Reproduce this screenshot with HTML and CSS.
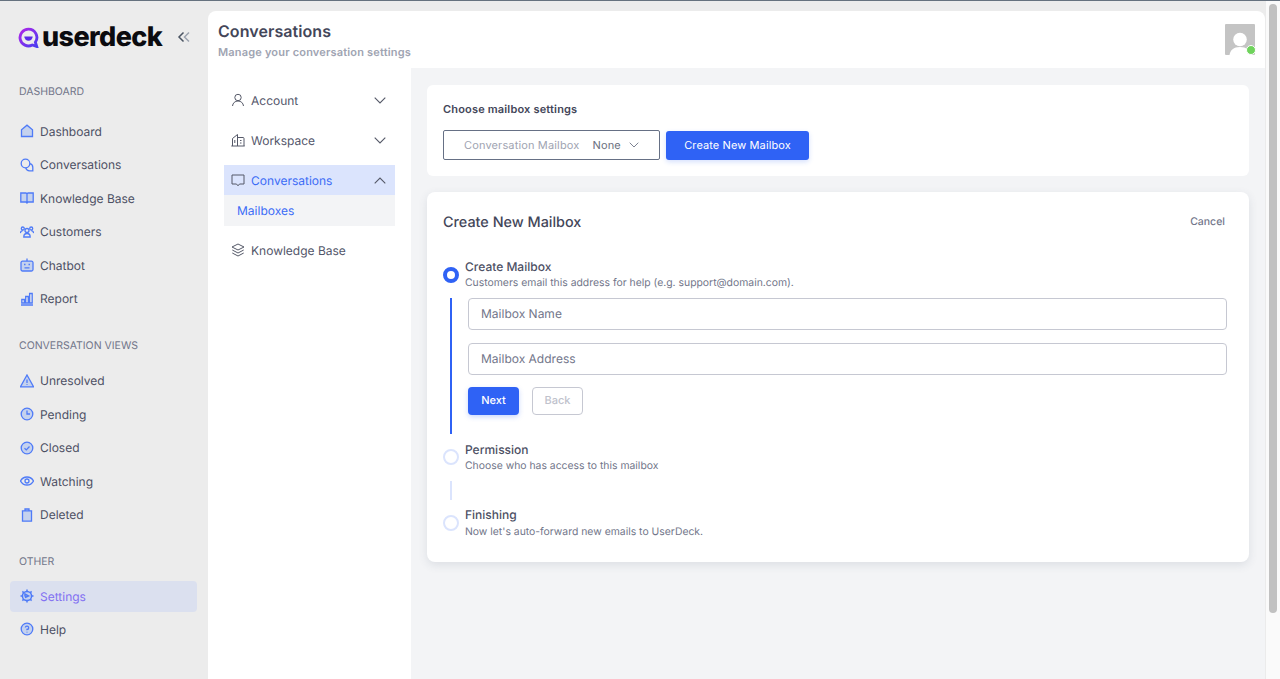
FILE: index.html
```html
<!DOCTYPE html>
<html lang="en">
<head>
<meta charset="utf-8">
<title>Conversations - UserDeck</title>
<link rel="stylesheet" href="styles.css">
</head>
<body>
<svg class="sprite" width="0" height="0" aria-hidden="true">
  <defs>
    <linearGradient id="logo-grad" x1="0" y1="0" x2="1" y2="1">
      <stop offset="0" stop-color="#b026e8"/>
      <stop offset="1" stop-color="#4a3cf0"/>
    </linearGradient>
  </defs>
</svg>
<div class="app">
  <aside class="sidebar">
    <div class="brand">
      <div class="logo">
        <svg class="logo-mark" viewBox="0 0 22 22" width="21" height="21">
          <path d="M11 2.200a8.800 8.800 0 1 0 4 16.600l4.600 1.600-1.400-4.400A8.800 8.800 0 0 0 11 2.200z" fill="none" stroke="url(#logo-grad)" stroke-width="3"/>
          <path d="M6.600 10h8.800a4.400 4.400 0 0 1-8.800 0z" fill="#5b2be8"/>
        </svg>
        <span class="logo-text">userdeck</span>
      </div>
      <svg class="collapse" viewBox="0 0 14 14" width="14" height="14"><path d="M6.500 2.500 2 7l4.500 4.500" stroke="#4b5563"/><path d="M12 2.500 7.500 7l4.500 4.500" stroke="#9ca3af"/></svg>
    </div>

    <h2 class="nav-label">DASHBOARD</h2>
    <nav class="nav-group nav-group-first">
      <a class="nav-item"><svg class="ni" viewBox="0 0 14 14"><path d="M1.500 12.500V5.800L7 1.200l5.500 4.600v6.700z"/></svg>Dashboard</a>
      <a class="nav-item"><svg class="ni line" viewBox="0 0 14 14"><circle cx="5.500" cy="5.500" r="4.300"/><path d="M9.800 5.700a3.900 3.900 0 0 1 3 3.800v3.300H9.500a3.900 3.900 0 0 1-3.700-3"/></svg>Conversations</a>
      <a class="nav-item"><svg class="ni" viewBox="0 0 14 14"><path d="M.8 2h5.200l1 .8 1-.8h5.200v9H8l-1 1-1-1H.8zM7 2.800V12"/></svg>Knowledge Base</a>
      <a class="nav-item"><svg class="ni line" viewBox="0 0 14 14"><circle cx="7" cy="5.500" r="2"/><path d="M3.800 12c0-2.200 1.300-3.500 3.200-3.500s3.200 1.300 3.200 3.500z"/><circle cx="2.800" cy="3.500" r="1.500"/><circle cx="11.200" cy="3.500" r="1.500"/><path d="M.3 8c.3-1.500 1.200-2.300 2.500-2.300M13.700 8c-.3-1.500-1.200-2.300-2.500-2.300"/></svg>Customers</a>
      <a class="nav-item"><svg class="ni" viewBox="0 0 14 14"><path d="M7 .5v2.700M2.500 3.200h9a1.500 1.500 0 0 1 1.500 1.500v6.800a1.500 1.500 0 0 1-1.500 1.500h-9A1.500 1.500 0 0 1 1 11.500V4.700a1.500 1.500 0 0 1 1.500-1.500zM4.500 9.800h5M4 6.500h1.500M8.500 6.500H10"/></svg>Chatbot</a>
      <a class="nav-item"><svg class="ni line" viewBox="0 0 14 14"><path d="M1 13h12M1.800 11V7.500h2.600V11zM5.700 11V4.500h2.600V11zM9.600 11V1.500h2.600V11z"/></svg>Report</a>
    </nav>

    <h2 class="nav-label">CONVERSATION VIEWS</h2>
    <nav class="nav-group">
      <a class="nav-item"><svg class="ni" viewBox="0 0 14 14"><path d="M7 1 13.500 12.800H.5zM7 5.500v3.500M7 10.300v.8"/></svg>Unresolved</a>
      <a class="nav-item"><svg class="ni" viewBox="0 0 14 14"><circle cx="7" cy="7" r="5.800"/><path d="M7 3.500V7h3"/></svg>Pending</a>
      <a class="nav-item"><svg class="ni" viewBox="0 0 14 14"><circle cx="7" cy="7" r="5.800"/><path d="m4.500 7.200 1.800 1.700 3.200-3.400"/></svg>Closed</a>
      <a class="nav-item"><svg class="ni line" viewBox="0 0 14 14"><path d="M.5 7C2 4.300 4.300 3 7 3s5 1.300 6.500 4C12 9.700 9.700 11 7 11S2 9.700.5 7z"/><circle cx="7" cy="7" r="2"/></svg>Watching</a>
      <a class="nav-item"><svg class="ni" viewBox="0 0 14 14"><path d="M2.500 2.800h9v10.400h-9zM1.800 2.800h10.400M5 2.800V1h4v1.800"/></svg>Deleted</a>
    </nav>

    <h2 class="nav-label">OTHER</h2>
    <nav class="nav-group">
      <a class="nav-item is-active"><svg class="ni gear" viewBox="0 0 14 14"><circle cx="7" cy="7" r="4.600"/><path d="M5 7.500V5l3.500 2-3.500 1.500"/><path d="M7 .5v1.900M7 11.600v1.900M.5 7h1.900M11.600 7h1.900M2.400 2.400l1.300 1.300M10.300 10.300l1.300 1.300M2.400 11.600l1.300-1.300M10.300 3.700l1.300-1.300"/></svg>Settings</a>
      <a class="nav-item"><svg class="ni" viewBox="0 0 14 14"><circle cx="7" cy="7" r="5.800"/><path d="M5.300 5.500A1.700 1.700 0 1 1 7 7.500v.8M7 9.700v.8"/></svg>Help</a>
    </nav>
  </aside>

  <div class="main">
    <header class="topbar">
      <div class="titles">
        <h1 class="page-title">Conversations</h1>
        <p class="page-sub">Manage your conversation settings</p>
      </div>
      <div class="avatar">
        <svg viewBox="0 0 30 31" width="30" height="31"><rect width="30" height="31" rx="1" fill="#c4c4c4"/><circle cx="15" cy="15.500" r="6.800" fill="#fff"/><path d="M4.500 31c.8-5 4-8 10.500-8s9.700 3 10.500 8z" fill="#fff"/></svg>
        <span class="status"></span>
      </div>
    </header>

    <div class="body">
      <nav class="subnav">
        <a class="sub-row"><svg class="si" viewBox="0 0 14 14"><circle cx="7" cy="4.500" r="3.200"/><path d="M1.500 13c.3-3 2.500-5 5.500-5s5.200 2 5.500 5"/></svg><span class="sub-text">Account</span><svg class="chev" viewBox="0 0 12 7"><path d="m.7.700 5.300 5.300L11.300.700"/></svg></a>
        <a class="sub-row"><svg class="si" viewBox="0 0 14 14"><path d="M.3 13h13.400M1.500 13V5.500L6.500 1.500V13M6.500 4.500h5.500a1 1 0 0 1 1 1V13M3.800 7v3M9 7.500h1.500M9 10h1.500"/></svg><span class="sub-text">Workspace</span><svg class="chev" viewBox="0 0 12 7"><path d="m.7.700 5.300 5.300L11.300.700"/></svg></a>
        <div class="sub-open">
          <a class="sub-row is-open"><svg class="si" viewBox="0 0 14 14"><path d="M1 2h12v9H8.500L7 12.800 5.500 11H1z"/></svg><span class="sub-text">Conversations</span><svg class="chev" viewBox="0 0 12 7"><path d="m.7 6.300 5.300-5.300 5.300 5.300"/></svg></a>
          <a class="sub-child">Mailboxes</a>
        </div>
        <a class="sub-row"><svg class="si" viewBox="0 0 14 14"><path d="M7 1 13 4 7 7 1 4zM1.300 7 7 10l5.700-3M1.300 10 7 13l5.700-3"/></svg><span class="sub-text">Knowledge Base</span></a>
      </nav>

      <main class="content">
        <section class="card chooser">
          <h3 class="chooser-title">Choose mailbox settings</h3>
          <div class="chooser-row">
            <div class="select">
              <span class="select-label">Conversation Mailbox</span>
              <span class="select-value">None</span>
              <svg class="select-chev" viewBox="0 0 10 6"><path d="m.7.700 4.300 4.300L9.300.700"/></svg>
            </div>
            <button class="btn btn-create">Create New Mailbox</button>
          </div>
        </section>

        <section class="card wizard">
          <div class="wizard-head">
            <h2 class="wizard-title">Create New Mailbox</h2>
            <span class="cancel">Cancel</span>
          </div>

          <div class="step step-first">
            <span class="dot is-current"></span>
            <div class="step-text">
              <div class="step-name">Create Mailbox</div>
              <div class="step-desc">Customers email this address for help (e.g. support@domain.com).</div>
            </div>
          </div>
          <div class="step-body">
            <div class="rail is-current"></div>
            <div class="form">
              <input class="field" placeholder="Mailbox Name">
              <input class="field" placeholder="Mailbox Address">
              <div class="form-actions">
                <button class="btn btn-next">Next</button>
                <button class="btn btn-back">Back</button>
              </div>
            </div>
          </div>

          <div class="step">
            <span class="dot"></span>
            <div class="step-text">
              <div class="step-name">Permission</div>
              <div class="step-desc">Choose who has access to this mailbox</div>
            </div>
          </div>
          <div class="step-gap"><div class="rail"></div></div>
          <div class="step step-last">
            <span class="dot"></span>
            <div class="step-text">
              <div class="step-name">Finishing</div>
              <div class="step-desc">Now let's auto-forward new emails to UserDeck.</div>
            </div>
          </div>
        </section>
      </main>
    </div>
  </div>

  <div class="scrollbar"><div class="thumb"></div></div>
</div>
</body>
</html>
```

FILE: styles.css
```css
* { box-sizing: border-box; }
html, body { height: 100%; margin: 0; }
body {
  overflow: hidden;
  font-family: Inter, "Liberation Sans", sans-serif;
  color: #434659;
  background: #ececec;
  text-rendering: geometricPrecision;
}
.sprite { position: absolute; }
h1, h2, h3, p { margin: 0; }
a { display: flex; }

.app {
  display: flex;
  height: 679px;
  border-top: 1px solid #66727f;
}

/* sidebar */
.sidebar { width: 208px; flex: none; padding: 0 11px 0 10px; }
.brand {
  display: flex;
  align-items: center;
  justify-content: space-between;
  height: 50px;
  margin-top: 11px;
  padding: 0 6px 0 8px;
}
.logo { display: flex; align-items: center; }
.logo-mark { flex: none; }
.logo-text {
  font-weight: 800;
  font-size: 27px;
  letter-spacing: -0.6px;
  color: #0b0b0f;
  line-height: 30px;
  margin-left: 3px;
}
.collapse { fill: none; stroke-width: 1.500; }
.nav-label {
  font-size: 10.500px;
  line-height: 14px;
  font-weight: 400;
  color: #72768a;
  padding-left: 9px;
  margin-top: 23px;
}
.nav-group { display: flex; flex-direction: column; margin-top: 11.500px; margin-bottom: .5px; }
.nav-group-first { margin-top: 15.500px; }
.nav-group:last-child { margin-top: 12px; margin-bottom: 0; }
.nav-item {
  align-items: center;
  height: 33.500px;
  padding-left: 10px;
  font-size: 12px;
  color: #4d5064;
  border-radius: 4px;
  gap: 6px;
}
.nav-item.is-active { height: 31px; margin-bottom: 1px; color: #8270f2; background: #dbe0ef; }
.ni {
  width: 14px;
  height: 14px;
  flex: none;
  fill: #c5d2ee;
  stroke: #4f7bf7;
  stroke-width: 1.300;
}
.ni.line { fill: none; }
.ni.gear { stroke-width: 1.500; }

/* main */
.main { flex: 1; min-width: 0; display: flex; flex-direction: column; margin-top: 10px; }
.topbar {
  height: 57px;
  flex: none;
  display: flex;
  align-items: center;
  justify-content: space-between;
  background: #fff;
  border-radius: 8px 8px 0 0;
  padding: 0 10px 0 10px;
}
.page-title { font-size: 16px; line-height: 20px; font-weight: 600; letter-spacing: .07px; color: #434659; }
.page-sub { font-size: 11px; line-height: 14px; font-weight: 600; letter-spacing: .18px; color: #a0a4b2; margin-top: 4px; }
.avatar { position: relative; width: 30px; height: 31px; }
.avatar svg { display: block; }
.status {
  position: absolute;
  right: -1px;
  bottom: 0;
  width: 10px;
  height: 10px;
  border-radius: 50%;
  background: #6fd35c;
  border: 1.500px solid #fff;
}
.body { flex: 1; display: flex; min-height: 0; background: #f3f4f6; }

/* settings sub navigation */
.subnav { width: 203px; flex: none; background: #fff; padding: 17px 16px 0; }
.sub-row {
  align-items: center;
  height: 30px;
  margin-bottom: 10px;
  padding: 0 9px 0 7px;
  font-size: 12px;
  color: #53566a;
}
.sub-text { flex: 1; margin-left: 6px; }
.si { width: 14px; height: 14px; flex: none; fill: none; stroke: #555968; stroke-width: 1; }
.chev { width: 12px; height: 7px; fill: none; stroke: #555968; stroke-width: 1.100; }
.sub-open { background: #f3f4f6; margin-bottom: 9px; }
.sub-row.is-open { background: #dbe4fd; color: #3b6cf6; margin-bottom: 0; }
.sub-child { align-items: center; height: 31px; padding-left: 13px; font-size: 12px; color: #3b6cf6; }

/* content */
.content { flex: 1; min-width: 0; padding: 17px 16px 0; }
.card { background: #fff; border-radius: 6px; }
.chooser { height: 91px; padding: 17px 16px 0; margin-bottom: 16px; }
.chooser-title { font-size: 11px; line-height: 15px; font-weight: 600; letter-spacing: .17px; color: #434659; }
.chooser-row { display: flex; align-items: center; gap: 6px; margin-top: 13px; }
.select {
  display: flex;
  align-items: center;
  width: 217px;
  height: 30px;
  border: 1px solid #667085;
  border-radius: 2px;
  padding-left: 20px;
  font-size: 11px;
  letter-spacing: .15px;
}
.select-label { color: #a0a4b2; }
.select-value { color: #6b7080; margin-left: 13px; }
.select-chev { width: 10px; height: 6px; margin-left: 8px; fill: none; stroke: #7d8292; stroke-width: 1; }
.btn { font-family: inherit; text-rendering: geometricPrecision; border-radius: 3px; cursor: pointer; font-size: 11px; }
.btn-create {
  width: 143px;
  height: 29px;
  border: 0;
  letter-spacing: .1px;
  color: #fff;
  background: #2f62f5;
  box-shadow: 0 2px 5px rgba(47, 98, 245, .2);
}
.wizard {
  height: 370px;
  padding: 0 16px;
  border-radius: 8px;
  box-shadow: 0 3px 10px rgba(60, 70, 100, .12);
}
.wizard-head {
  display: flex;
  align-items: center;
  justify-content: space-between;
  height: 60px;
  padding-right: 8px;
}
.wizard-title { font-size: 14.400px; font-weight: 500; color: #434659; }
.cancel { font-size: 10.500px; font-weight: 500; color: #72768a; padding-bottom: 2px; }
.step { display: flex; align-items: center; gap: 6px; height: 32px; margin-top: 7px; }
.step-first { margin-top: 6px; }
.step-text { padding-top: 2px; }
.step-last .step-name { margin-top: -1px; margin-bottom: 1px; }
.dot {
  width: 16px;
  height: 16px;
  flex: none;
  border-radius: 50%;
  border: 2px solid #dbe4fd;
  background: #fff;
}
.dot.is-current { border: 4px solid #2f62f5; margin-top: 2px; }
.step-name { font-size: 12px; line-height: 16px; font-weight: 500; color: #4d5064; }
.step-desc { font-size: 10.400px; line-height: 16px; color: #72768a; }
.step-body { display: flex; height: 136px; margin-top: 8px; padding-left: 7px; }
.rail { width: 2px; height: 100%; background: #dbe4fd; }
.rail.is-current { background: #2f62f5; }
.form { flex: 1; padding: 0 6px 0 16px; }
.field {
  display: block;
  width: 100%;
  height: 32px;
  padding: 0 12px 2px;
  margin-bottom: 13px;
  border: 1px solid #c6c8d2;
  border-radius: 4px;
  font-family: inherit;
  text-rendering: geometricPrecision;
  font-size: 12px;
  color: #434659;
  background: #fff;
}
.field::placeholder { color: #72768a; opacity: 1; }
.form-actions { display: flex; gap: 13px; margin-top: -1px; }
.btn-next {
  width: 51px;
  height: 28px;
  padding-bottom: 3px;
  border: 0;
  color: #fff;
  background: #2f62f5;
  border-radius: 4px;
  font-weight: 500;
  box-shadow: 0 2px 5px rgba(47, 98, 245, .25);
}
.btn-back {
  width: 51px;
  height: 28px;
  padding-bottom: 3px;
  border: 1px solid #c6c8d2;
  background: #fff;
  color: #c0c2cc;
  border-radius: 4px;
  font-weight: 500;
}
.step-gap { height: 19px; margin-top: 8px; padding-left: 7px; }

/* fake page scrollbar */
.scrollbar {
  width: 15px;
  flex: none;
  padding: 3px 3px 0 3px;
  background: #fafafa;
  border-left: 1px solid #ebebeb;
}
.thumb { height: 609px; background: #c1c1c1; border-radius: 4px; }
```
